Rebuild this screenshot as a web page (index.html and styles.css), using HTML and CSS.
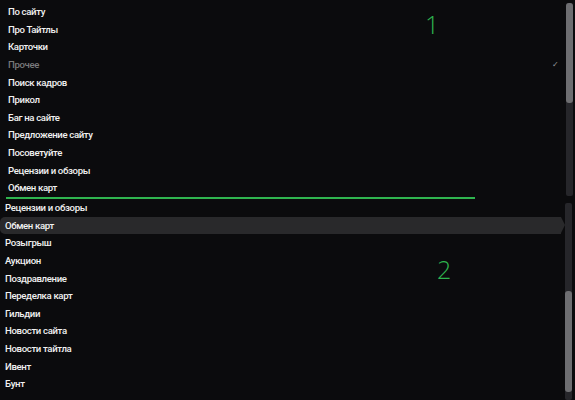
FILE: index.html
```html
<!DOCTYPE html>
<html lang="ru">
<head>
    <meta charset="UTF-8">
    <meta name="viewport" content="width=device-width, initial-scale=1.0">
    <title>Категории</title>
    <link rel="stylesheet" href="styles.css">
</head>
<body>

<div class="panel panel-top">
    <ul class="menu">
        <li>По сайту</li>
        <li>Про Тайтлы</li>
        <li>Карточки</li>
        <li class="muted">Прочее <span class="check">&#10003;</span></li>
        <li>Поиск кадров</li>
        <li>Прикол</li>
        <li>Баг на сайте</li>
        <li>Предложение сайту</li>
        <li>Посоветуйте</li>
        <li>Рецензии и обзоры</li>
        <li>Обмен карт</li>
        <li class="divider"></li>
    </ul>
    <div class="scroll">
        <div class="thumb"></div>
    </div>
    <span class="mark mark-1">1</span>
</div>

<div class="panel panel-bottom">
    <ul class="menu">
        <li>Рецензии и обзоры</li>
        <li class="active">Обмен карт</li>
        <li>Розыгрыш</li>
        <li>Аукцион</li>
        <li>Поздравление</li>
        <li>Переделка карт</li>
        <li>Гильдии</li>
        <li>Новости сайта</li>
        <li>Новости тайтла</li>
        <li>Ивент</li>
        <li>Бунт</li>
    </ul>
    <div class="scroll">
        <div class="thumb"></div>
    </div>
    <span class="mark mark-2">2</span>
</div>

</body>
</html>
```

FILE: styles.css
```css
body {
    font-family: Roboto, "Noto Sans", sans-serif;
    background-color: #0b0b0d;
    color: #f2f2f2;
    margin: 0;
    width: 575px;
    height: 400px;
    overflow: hidden;
}
.panel {
    position: relative;
    display: flex;
}
.menu {
    list-style: none;
    margin: 0;
    padding: 0;
    flex: 1;
}
.menu li {
    display: flex;
    align-items: center;
    height: 17.6px;
    font-size: 9.6px;
    font-weight: 500;
    letter-spacing: -0.35px;
    white-space: nowrap;
}

/* first list */
.panel-top {
    height: 199px;
}
.panel-top .menu {
    padding-top: 3px;
}
.panel-top .menu li {
    padding-left: 8px;
}
.panel-top .menu li.muted {
    color: #7a7a7c;
    padding-right: 7px;
}
.check {
    margin-left: auto;
    font-size: 8px;
    color: #9a9a9c;
}
.panel-top .menu li.divider {
    height: 2px;
    margin: 0 0 0 6px;
    padding: 0;
    width: 469px;
    background-color: #2fb54f;
}
.panel-top .scroll {
    margin: 3px 2px 3px 0;
}

/* second list */
.panel-bottom {
    height: 201px;
}
.panel-bottom .menu li {
    padding-left: 5px;
}
.panel-bottom .menu li.active {
    position: relative;
    background-color: #29292b;
    margin-right: 4px;
    border-radius: 5px 0 0 5px;
}
.panel-bottom .menu li.active::after {
    content: "";
    position: absolute;
    left: 100%;
    top: 0;
    border-style: solid;
    border-width: 8.8px 0 8.8px 4px;
    border-color: transparent transparent transparent #29292b;
}
.panel-bottom .scroll {
    margin: 4px 3px 0 0;
}
.panel-bottom .scroll .thumb {
    margin-top: 88px;
}

/* scrollbars */
.scroll {
    width: 7px;
    background-color: #26262a;
    border-radius: 2px;
}
.panel-top .scroll .thumb {
    height: 100px;
}
.panel-bottom .scroll .thumb {
    height: 101px;
}
.thumb {
    background-color: #6e6e71;
    border-radius: 3px;
}

/* numbers on top of the lists */
.mark {
    position: absolute;
    color: #2fb54f;
    font-family: "Open Sans", sans-serif;
    font-size: 25px;
    font-weight: 300;
    line-height: 1;
}
.mark-1 {
    left: 425px;
    top: 12px;
}
.mark-2 {
    left: 437px;
    top: 58px;
}
```
